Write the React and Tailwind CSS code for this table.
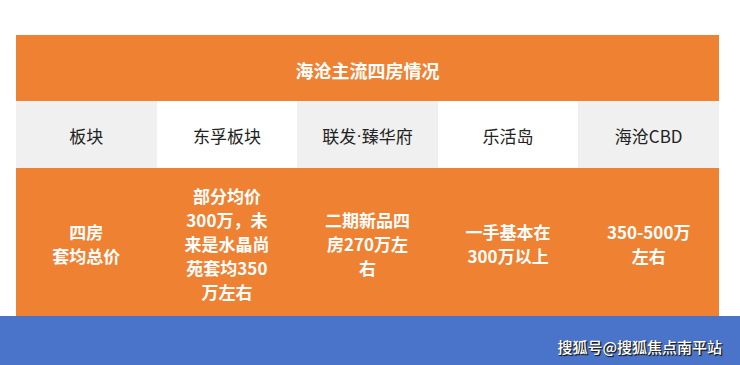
export default function App() {
  const font = { fontFamily: '"Noto Sans CJK SC", "Noto Sans", sans-serif' };
  const headers = [
    "板块",
    "东孚板块",
    <>联发<span style={{ fontFamily: '"Liberation Sans", sans-serif' }}>·</span>臻华府</>,
    "乐活岛",
    "海沧CBD",
  ];
  const cells = [
    <>四房<br />套均总价</>,
    "部分均价300万，未来是水晶尚苑套均350万左右",
    "二期新品四房270万左右",
    "一手基本在300万以上",
    "350-500万左右",
  ];
  return (
    <div className="w-[740px] h-[365px] bg-white flex flex-col overflow-hidden" style={font}>
      <div className="h-[35px]" />
      <div className="ml-[16px] w-[703px] flex flex-col">
        <div className="h-[66px] bg-[#ee8232] flex items-center justify-center text-white font-bold text-[18px] pt-[5px]">
          海沧主流四房情况
        </div>
        <div className="h-[67px] grid grid-cols-5">
          {headers.map((h, i) => (
            <div
              key={i}
              className={`flex items-center justify-center text-[17px] text-[#222] pt-[3px] ${i % 2 === 0 ? "bg-[#f0f0f0]" : "bg-white"}`}
            >
              {h}
            </div>
          ))}
        </div>
        <div className="h-[149px] grid grid-cols-5 bg-[#ee8232]">
          {cells.map((c, i) => (
            <div key={i} className="flex items-center justify-center px-[25px] pt-[2px]">
              <div className="text-white font-bold text-[17px] leading-[24px] text-center">
                {c}
              </div>
            </div>
          ))}
        </div>
      </div>
      <div className="flex-1 -mt-px bg-[#4a74c9] flex items-center justify-end pr-[18px] pt-[14px]">
        <span
          className="text-white text-[15px] font-medium"
          style={{ textShadow: "1px 1px 0 #222, 1px 1px 1px #000" }}
        >
          搜狐号@搜狐焦点南平站
        </span>
      </div>
    </div>
  );
}
